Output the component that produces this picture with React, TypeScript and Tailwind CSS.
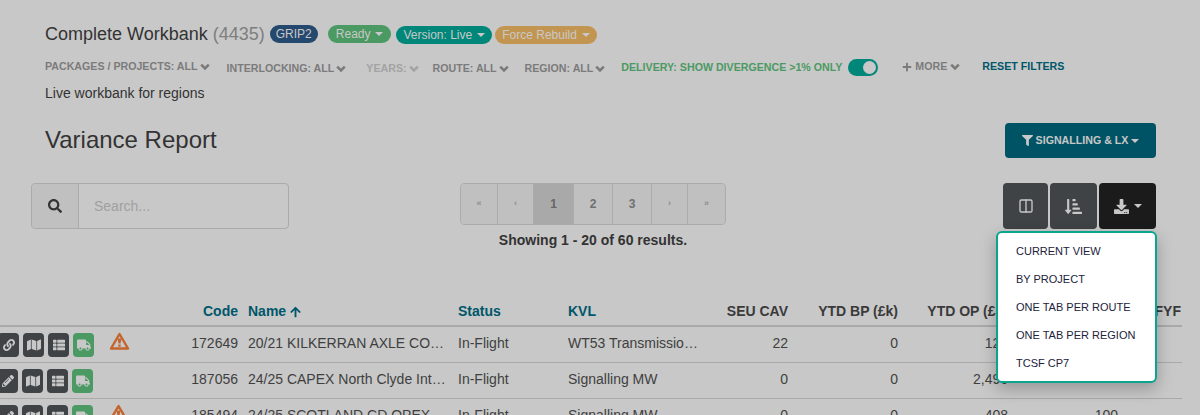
import React from "react";
import { FaSearch, FaFilter, FaPlus, FaLink, FaMap, FaThList, FaTruck, FaPencilAlt, FaDownload, FaArrowUp, FaSortAmountDownAlt } from "react-icons/fa";
import { LuColumns2 } from "react-icons/lu";

const Caret = ({ c = "border-t-[#c8c8c8]" }: { c?: string }) => (
  <span className={`inline-block w-0 h-0 border-x-[4px] border-x-transparent border-t-[4px] ${c}`} />
);

const Chevron = () => (
  <svg viewBox="0 0 10 8" className="w-[10px] h-[8px]">
    <polyline points="1.2,1.6 5,5.4 8.8,1.6" fill="none" stroke="currentColor" strokeWidth="2.6" />
  </svg>
);

const Pill = ({ bg, children, px = "px-[7px]" }: { bg: string; children: React.ReactNode; px?: string }) => (
  <span className={`inline-flex items-center gap-[5px] h-[18px] ${px} rounded-full text-[12px] text-[#c8c8c8] ${bg}`}>
    {children}
    <Caret />
  </span>
);

const Filter = ({ children, muted = false }: { children: React.ReactNode; muted?: boolean }) => (
  <span className={`inline-flex items-center gap-[2px] text-[10.65px] font-bold ${muted ? "text-[#a3a3a3]" : "text-[#7b7b7b]"}`}>
    {children}
    <Chevron />
  </span>
);

const Tri = () => (
  <svg viewBox="0 0 20 18" className="w-[21px] h-[18px]">
    <path d="M10 2 L18.5 16.5 H1.5 Z" fill="none" stroke="#c4642c" strokeWidth="2.4" strokeLinejoin="round" />
    <path d="M8 6.5 H12 L11 11.5 H9 Z M8.8 12.5 H11.2 V14.8 H8.8 Z" fill="#c4642c" />
  </svg>
);

const ABtn = ({ green, children }: { green?: boolean; children: React.ReactNode }) => (
  <span className={`w-[21px] h-[24px] rounded-[4px] flex items-center justify-center text-[#c8c8c8] shrink-0 ${green ? "bg-[#4b9a63]" : "bg-[#3f4346]"}`}>
    {children}
  </span>
);

const Row = ({ first, wide, warn, code, name, kvl, seu, bp, op, last, border = true }: any) => (
  <div className={`flex items-center text-[14px] text-[#3f3f3f] h-[36px] ${border ? "border-b border-[#a9a9a9]" : ""}`}>
    <div className={`w-[190px] shrink-0 flex items-center ${wide ? "-ml-[2px]" : "-ml-[3px]"}`}>
      <div className="flex items-center gap-[4px] w-[110px]">
        <ABtn>{first}</ABtn>
        <ABtn><FaMap className="w-[14px] h-[14px]" /></ABtn>
        <ABtn><FaThList className="w-[12px] h-[12px]" /></ABtn>
        <ABtn green><FaTruck className="w-[14px] h-[14px]" /></ABtn>
      </div>
      {warn && <span className="mb-[8px] ml-[1px]"><Tri /></span>}
    </div>
    <div className={`${wide ? "w-[50px]" : "w-[51px]"} shrink-0 text-right pb-[3px]`}>{code}</div>
    <div className="w-[200px] shrink-0 ml-[10px] truncate pb-[3px]">{name}</div>
    <div className="w-[110px] shrink-0 ml-[10px] pb-[3px]">In-Flight</div>
    <div className="w-[132px] shrink-0 truncate pb-[3px]">{kvl}</div>
    <div className="w-[88px] shrink-0 text-right pb-[3px]">{seu}</div>
    <div className="w-[110px] shrink-0 text-right pb-[3px]">{bp}</div>
    <div className="w-[110px] shrink-0 text-right pb-[3px]">{op}</div>
    <div className="w-[110px] shrink-0 text-right pb-[3px]">{last}</div>
  </div>
);

const Page = ({ w, active, small, children }: { w: string; active?: boolean; small?: boolean; children: React.ReactNode }) => (
  <span className={`${w} flex items-center justify-center border-r border-[#ababab] last:border-r-0 font-bold ${small ? "text-[9px] text-[#8e8e8e]" : "text-[12px] text-[#6f6f6f]"} ${active ? "bg-[#a9a9a9] text-[#666]" : "bg-[#c0c0c0]"}`}>
    {children}
  </span>
);

export default function App() {
  return (
    <div className="relative w-[1200px] h-[415px] overflow-hidden bg-[#c8c8c8] text-[#333] font-['Liberation_Sans',Arial,sans-serif]">
      <div className="pt-[21px] pl-[45px] pr-[44px]">
        <div className="flex items-center h-[26px]">
          <span className="text-[18px] text-[#333]">Complete Workbank</span>
          <span className="text-[18px] text-[#7e7e7e] ml-[5px]">(4435)</span>
          <span className="ml-[5px] h-[18px] px-[6px] rounded-full bg-[#25486e] text-[12px] text-[#c8c8c8] flex items-center">GRIP2</span>
          <span className="flex items-center ml-[10px]">
            <Pill bg="bg-[#4b9a63]" px="px-[8px]">Ready</Pill>
            <span className="ml-[5px]"><Pill bg="bg-[#00877a]">Version: Live</Pill></span>
            <span className="ml-[3px]"><Pill bg="bg-[#c29650]">Force Rebuild</Pill></span>
          </span>
        </div>
        <div className="flex items-center h-[20px] mt-[10px] whitespace-nowrap">
          <Filter>PACKAGES / PROJECTS: ALL</Filter>
          <span className="ml-[17px]"><Filter>INTERLOCKING: ALL</Filter></span>
          <span className="ml-[20px]"><Filter muted>YEARS:</Filter></span>
          <span className="ml-[14px]"><Filter>ROUTE: ALL</Filter></span>
          <span className="ml-[16px]"><Filter>REGION: ALL</Filter></span>
          <span className="ml-[16px] mt-[1px] text-[10.65px] font-bold text-[#4b9a63]">DELIVERY: SHOW DIVERGENCE &gt;1% ONLY</span>
          <span className="ml-[6px] w-[30px] h-[17px] rounded-full bg-[#00877a] flex items-center justify-end pr-[2px]">
            <span className="w-[13px] h-[13px] rounded-full bg-[#c8c8c8]" />
          </span>
          <span className="ml-[24px] inline-flex items-center gap-[3px] text-[10.65px] font-bold text-[#7b7b7b]">
            <FaPlus className="w-[10px] h-[10px]" /> MORE <Chevron />
          </span>
          <span className="ml-[22px] text-[10.65px] font-bold text-[#00566a]">RESET FILTERS</span>
        </div>
        <div className="text-[14px] leading-[18px] mt-[7px] text-[#333]">Live workbank for regions</div>
        <div className="flex items-start justify-between mt-[20px] h-[46px]">
          <div className="text-[24px] leading-[34px] mt-[1px] text-[#333]">Variance Report</div>
          <button className="w-[151px] h-[35px] mt-[1px] rounded-[4px] bg-[#005365] text-[#c8c8c8] text-[10.65px] font-bold flex items-center justify-center gap-[3px]">
            <FaFilter className="w-[11px] h-[11px]" /> SIGNALLING &amp; LX <Caret />
          </button>
        </div>
      </div>

      <div className="flex items-start mt-[15px] pl-[31px]">
        <div className="flex w-[258px] h-[46px] border border-[#ababab] rounded-[4px]">
          <span className="w-[47px] bg-[#c0c0c0] rounded-l-[4px] border-r border-[#ababab] flex items-center justify-center">
            <FaSearch className="w-[14px] h-[14px] text-[#333]" />
          </span>
          <span className="flex-1 flex items-center pl-[15px] text-[14px] text-[#a0a0a0]">Search...</span>
        </div>
        <div className="ml-[171px] flex flex-col items-center w-[266px]">
          <div className="flex w-[266px] h-[42px] border border-[#ababab] rounded-[4px] overflow-hidden">
            <Page w="w-[37px]" small>«</Page>
            <Page w="w-[36px]" small>‹</Page>
            <Page w="w-[40px]" active>1</Page>
            <Page w="w-[39px]">2</Page>
            <Page w="w-[39px]">3</Page>
            <Page w="w-[36px]" small>›</Page>
            <Page w="w-[37px]" small>»</Page>
          </div>
          <div className="mt-[5px] text-[14px] font-bold text-[#333] whitespace-nowrap">Showing 1 - 20 of 60 results.</div>
        </div>
        <div className="ml-[277px] flex gap-[2px]">
          <span className="w-[45px] h-[46px] rounded-[4px] bg-[#3f4346] flex items-center justify-center text-[#c8c8c8]"><LuColumns2 className="w-[16px] h-[16px]" /></span>
          <span className="w-[47px] h-[46px] rounded-[4px] bg-[#3f4346] flex items-center justify-center text-[#c8c8c8]"><FaSortAmountDownAlt className="w-[17px] h-[17px]" /></span>
          <span className="w-[57px] h-[46px] rounded-[4px] bg-[#1b1b1b] flex items-center justify-center gap-[5px] text-[#c8c8c8]"><FaDownload className="w-[15px] h-[15px]" /><Caret /></span>
        </div>
      </div>

      <div className="w-[1182px] mt-[39px]">
        <div className="flex items-center h-[37px] pt-[8px] text-[14px] font-bold text-[#3a3a3a] border-b-2 border-[#a9a9a9]">
          <div className="w-[190px] shrink-0" />
          <div className="w-[48px] shrink-0 text-right text-[#00566a]">Code</div>
          <div className="w-[200px] shrink-0 ml-[10px] text-[#00566a] flex items-center gap-[4px]">Name <FaArrowUp className="w-[11px] h-[12px]" /></div>
          <div className="w-[110px] shrink-0 ml-[10px] text-[#00566a]">Status</div>
          <div className="w-[132px] shrink-0 text-[#00566a]">KVL</div>
          <div className="w-[88px] shrink-0 text-right">SEU CAV</div>
          <div className="w-[110px] shrink-0 text-right">YTD BP (£k)</div>
          <div className="w-[110px] shrink-0 text-right">YTD OP (£k)</div>
          <div className="w-[173px] shrink-0 text-right">FYF</div>
        </div>
        <Row wide first={<FaLink className="w-[12px] h-[12px]" />} warn code="172649" name="20/21 KILKERRAN AXLE COUNTER RENEWAL" kvl="WT53 Transmission Renewals" seu="22" bp="0" op="124" />
        <Row first={<FaPencilAlt className="w-[12px] h-[12px]" />} code="187056" name="24/25 CAPEX North Clyde Interlocking" kvl="Signalling MW" seu="0" bp="0" op="2,496" />
        <Row first={<FaPencilAlt className="w-[12px] h-[12px]" />} warn code="185494" name="24/25 SCOTLAND CD OPEX" kvl="Signalling MW" seu="0" bp="0" op="408" last="100" border={false} />
      </div>

      <div className="absolute left-[996px] top-[231px] w-[161px] h-[152px] bg-white border-2 border-[#0aa58f] rounded-[6px] shadow-[0_6px_16px_rgba(0,0,0,0.25)] pt-[4px] pl-[18px] text-[11px] text-[#22223a]">
        {["CURRENT VIEW", "BY PROJECT", "ONE TAB PER ROUTE", "ONE TAB PER REGION", "TCSF CP7"].map((t) => (
          <div key={t} className="h-[28px] flex items-center whitespace-nowrap">{t}</div>
        ))}
      </div>
    </div>
  );
}
